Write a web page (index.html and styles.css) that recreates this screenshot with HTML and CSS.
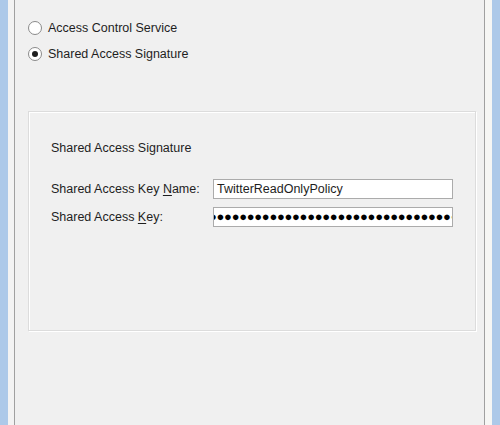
FILE: index.html
```html
<!DOCTYPE html>
<html lang="en">
<head>
    <meta charset="UTF-8">
    <title>Connection Settings</title>
    <link rel="stylesheet" href="styles.css">
</head>
<body>
    <div class="frame">
        <div class="edge"></div>
        <div class="pane">
            <div class="options">
                <label class="radio"><span class="dot"></span>Access Control Service</label>
                <label class="radio"><span class="dot checked"></span>Shared Access Signature</label>
            </div>
            <div class="group">
                <div class="group-title">Shared Access Signature</div>
                <div class="field">
                    <span class="label">Shared Access Key <u>N</u>ame:</span>
                    <div class="textbox">TwitterReadOnlyPolicy</div>
                </div>
                <div class="field">
                    <span class="label">Shared Access <u>K</u>ey:</span>
                    <div class="textbox secret">&#9679;&#9679;&#9679;&#9679;&#9679;&#9679;&#9679;&#9679;&#9679;&#9679;&#9679;&#9679;&#9679;&#9679;&#9679;&#9679;&#9679;&#9679;&#9679;&#9679;&#9679;&#9679;&#9679;&#9679;&#9679;&#9679;&#9679;&#9679;&#9679;&#9679;&#9679;&#9679;&#9679;</div>
                </div>
            </div>
        </div>
        <div class="edge right"></div>
    </div>
</body>
</html>
```

FILE: styles.css
```css
body { margin: 0; background: #f0f0f0; font-family: "Liberation Sans", Arial, sans-serif; font-size: 12.5px; color: #1e1e1e; }
.frame { display: flex; height: 425px; }
.edge { width: 8px; background: #adc9e9; border-right: 6px solid #f3f3f3; }
.edge.right { border-right: none; border-left: 7px solid #f6f6f4; }
.pane { flex: 1; border-left: 1px solid #a0a0a0; border-right: 1px solid #a0a0a0; padding-left: 13px; padding-right: 7px; }
.options { padding-top: 20px; display: flex; flex-direction: column; gap: 10px; }
.radio { display: flex; align-items: center; height: 16px; }
.dot { width: 12px; height: 12px; border: 1px solid #8a8a8a; border-radius: 50%; background: #fff; margin-right: 6px; position: relative; }
.dot.checked::after { content: ""; position: absolute; left: 3px; top: 3px; width: 6px; height: 6px; border-radius: 50%; background: #1e1e1e; }
.group { margin-top: 49px; height: 220px; border: 1px solid #dcdcdc; box-shadow: inset 1px 1px 0 #fff, 1px 1px 0 #fff; padding: 29px 0 0 22px; box-sizing: border-box; margin-right: 1px; }
.group-title { margin-bottom: 24px; }
.field { display: flex; align-items: center; margin-bottom: 8px; }
.label { width: 162px; }
.label u { text-decoration-thickness: 1px; text-underline-offset: 2px; }
.textbox { width: 240px; height: 20px; box-sizing: border-box; border: 1px solid #ababab; background: #fff; padding: 0 3px; line-height: 18px; overflow: hidden; white-space: nowrap; }
.secret { font-size: 13px; color: #000; letter-spacing: -0.3px; padding: 0; text-indent: -5px; }
```
